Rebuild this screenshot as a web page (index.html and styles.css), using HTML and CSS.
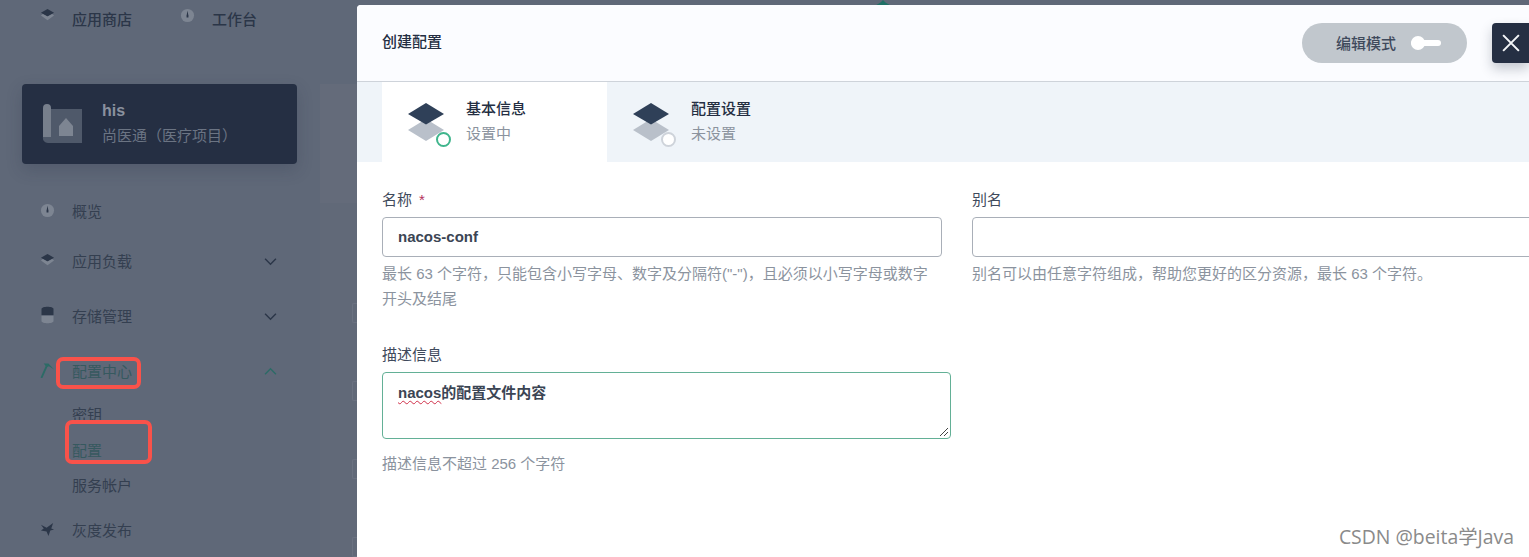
FILE: index.html
```html
<!DOCTYPE html>
<html lang="zh-CN">
<head>
<meta charset="utf-8">
<title>创建配置</title>
<link rel="stylesheet" href="styles.css">
</head>
<body>
<div class="page">
  <aside class="side">
    <div class="nav">
      <nav class="topnav">
        <span class="topitem first"><svg class="ico16" viewBox="0 0 16 16"><path d="M8 1l7 4-7 4-7-4z" fill="#2b3648"/><path d="M8 9L3 6.500 1 8l7 5 7-5-2-1.500z" fill="#7d8592"/></svg><b>应用商店</b></span>
        <span class="topitem second"><svg class="ico16" viewBox="0 0 16 16"><circle cx="8" cy="8" r="7" fill="#7d8592"/><path d="M7 8l1-5 1 5v2H7z" fill="#2b3648"/></svg><b>工作台</b></span>
      </nav>
      <div class="project">
        <svg class="proj-ico" viewBox="0 0 40 40"><rect x="7" y="5" width="33" height="34" fill="#4f596a"/><path d="M1 4a4 4 0 0 1 8 0v29H5a4 4 0 0 0-4 4z" fill="#777f8c"/><path d="M1 33a5 5 0 0 0 5 6h4v-6z" fill="#4f596a"/><path d="M17 22l7-8 7 8v10H17z" fill="#7d8592"/></svg>
        <div class="proj-text"><strong>his</strong><span>尚医通（医疗项目）</span></div>
      </div>
      <ul class="menu">
        <li class="mi first-mi"><svg class="ico16" viewBox="0 0 16 16"><circle cx="8" cy="8" r="7" fill="#7d8592"/><path d="M7 8l1-5 1 5v2H7z" fill="#2b3648"/></svg><span>概览</span></li>
        <li class="mi"><svg class="ico16" viewBox="0 0 16 16"><path d="M8 1l7 4-7 4-7-4z" fill="#2b3648"/><path d="M8 9L3 6.500 1 8l7 5 7-5-2-1.500z" fill="#7d8592"/></svg><span>应用负载</span><svg class="chev" viewBox="0 0 12 8"><path d="M1 1.500l5 5 5-5" fill="none" stroke="#2b3648" stroke-width="1.300"/></svg></li>
        <li class="mi"><svg class="ico16 tall" viewBox="0 0 14 18"><path d="M1 3c0-3 12-3 12 0v6H1z" fill="#2b3648"/><path d="M1 10h12v5c0 3-12 3-12 0z" fill="#7d8592"/></svg><span>存储管理</span><svg class="chev" viewBox="0 0 12 8"><path d="M1 1.500l5 5 5-5" fill="none" stroke="#2b3648" stroke-width="1.300"/></svg></li>
        <li class="mi on"><svg class="ico16" viewBox="0 0 16 16"><path d="M1.500 16L7 3.500" stroke="#2c6b66" stroke-width="2" fill="none"/><path d="M4 0.500h5l6 6.500-5.500-3.500-2.500 1z" fill="#2c6b66"/></svg><span class="hl-wrap">配置中心<i class="hl hl-a"></i></span><svg class="chev" viewBox="0 0 12 8"><path d="M1 6.500l5-5 5 5" fill="none" stroke="#2c6b66" stroke-width="1.300"/></svg></li>
      </ul>
      <ul class="sub">
        <li>密钥</li>
        <li class="on hl-wrap">配置<i class="hl hl-b"></i></li>
        <li>服务帐户</li>
      </ul>
      <div class="mi last"><svg class="ico16" viewBox="0 0 16 16"><path d="M1 3l6 3 7-5-2 6 3 1-4 1-2 6-2-5-6-1 3-2z" fill="#2b3648"/></svg><span>灰度发布</span></div>
    </div>
    <div class="strip">
      <div class="strip-top"></div>
      <div class="strip-low"><i></i><i></i><i></i><i></i></div>
    </div>
  </aside>
  <main class="panel">
    <header class="head">
      <h1>创建配置</h1>
      <div class="mode"><span>编辑模式</span><i class="toggle"></i></div>
      <button class="close" aria-label="关闭"><svg viewBox="0 0 16 16"><path d="M1 1l14 14M15 1L1 15" stroke="#f4f6f9" stroke-width="1.800" fill="none"/></svg></button>
    </header>
    <div class="tabs">
      <div class="tab active">
        <span class="tab-ico"><svg viewBox="0 0 38 38"><path d="M19 16l18 11-18 11L1 27z" fill="#b9c0ca"/><path d="M19 0l18 11-18 10.500L1 11z" fill="#2f4058"/></svg><i class="dot green"></i></span>
        <div class="tab-text"><strong>基本信息</strong><span>设置中</span></div>
      </div>
      <div class="tab">
        <span class="tab-ico"><svg viewBox="0 0 38 38"><path d="M19 16l18 11-18 11L1 27z" fill="#b9c0ca"/><path d="M19 0l18 11-18 10.500L1 11z" fill="#2f4058"/></svg><i class="dot grey"></i></span>
        <div class="tab-text"><strong>配置设置</strong><span>未设置</span></div>
      </div>
    </div>
    <form class="form">
      <div class="row">
        <div class="field name-field">
          <label>名称<em>*</em></label>
          <div class="input">nacos-conf</div>
          <p class="tip">最长 63 个字符，只能包含小写字母、数字及分隔符("-")，且必须以小写字母或数字开头及结尾</p>
        </div>
        <div class="field alias-field">
          <label>别名</label>
          <div class="input"></div>
          <p class="tip">别名可以由任意字符组成，帮助您更好的区分资源，最长 63 个字符。</p>
        </div>
      </div>
      <div class="field desc-field">
        <label>描述信息</label>
        <div class="textarea"><span class="typo">nacos</span>的配置文件内容<svg class="grip" viewBox="0 0 10 10"><path d="M9 1L1 9M9 5L5 9" stroke="#444" stroke-width="1" fill="none"/></svg></div>
        <p class="tip">描述信息不超过 256 个字符</p>
      </div>
    </form>
    <div class="mark">CSDN @beita学Java</div>
  </main>
  <svg class="peek" viewBox="0 0 16 6"><path d="M0 6l5-3 3-3 3 3 5 3z" fill="#1f6f66"/></svg>
</div>
</body>
</html>
```
FILE: styles.css
```css
* { box-sizing: border-box; }
html, body { margin: 0; height: 100%; }
body {
  width: 1529px;
  height: 557px;
  overflow: hidden;
  background: #5f6878;
  font-family: "Liberation Sans", "Noto Sans CJK SC", sans-serif;
  font-size: 15px;
  color: #2b3648;
}
.page { position: relative; display: flex; height: 557px; }
ul { list-style: none; margin: 0; padding: 0; }

.side { width: 357px; flex: none; display: flex; }
.nav { width: 320px; flex: none; padding-left: 22px; }
.strip { flex: 1; display: flex; flex-direction: column; padding-top: 84px; }
.strip-top { height: 136px; background: #646b7a; }
.strip-low { flex: 1; background: #616978; padding: 100px 0 0 32px; display: flex; flex-direction: column; gap: 58px; }
.strip-low i { display: block; height: 20px; border: 1px solid #6b7281; border-right: 0; border-radius: 2px 0 0 2px; }

.topnav { display: flex; height: 84px; padding: 9px 0 0 18px; align-items: flex-start; }
.topitem { display: flex; align-items: center; height: 18px; }
.topitem .ico16 { margin-bottom: 6px; }
.topitem b { margin-left: 17px; font-weight: 500; color: #2b3648; }
.topitem.first { width: 140px; }
.ico16 { width: 15px; height: 15px; flex: none; }
.ico16.tall { height: 18px; }

.project {
  width: 275px;
  height: 80px;
  background: #252f43;
  border-radius: 4px;
  box-shadow: 0 6px 16px rgba(37, 47, 67, .22);
  display: flex;
  align-items: center;
  padding-left: 20px;
}
.proj-ico { width: 40px; height: 40px; flex: none; }
.proj-text { margin-left: 20px; display: flex; flex-direction: column; }
.proj-text strong { font-size: 16px; line-height: 22px; color: #8a919e; }
.proj-text span { line-height: 24px; margin-top: 2px; color: #6b7483; }

.menu { margin-top: 29px; }
.mi { position: relative; display: flex; align-items: center; height: 34px; padding-left: 18px; width: 275px; color: #343f50; }
.mi + .mi { margin-top: 21px; }
.first-mi + .mi { margin-top: 16px; }
.mi > span { margin-left: 17px; }
.chev { position: absolute; left: 242px; top: 14px; width: 13px; height: 9px; }
.mi.on { color: #36595f; }
.hl-wrap { position: relative; }
.hl { position: absolute; border: 4px solid #f9524a; border-radius: 7px; }
.hl-a { left: -16px; top: -3px; width: 85px; height: 32px; }
.hl-b { left: -7px; top: -13px; width: 87px; height: 44px; }

.sub { padding-left: 50px; margin-top: 10px; color: #343f50; }
.sub li { height: 35.5px; line-height: 35px; width: 80px; }
.sub li.on { color: #36595f; display: block; }
.mi.last { margin-top: 9px; }

.panel { position: relative; flex: 1; min-width: 0; margin-top: 5px; background: #fff; border-radius: 4px 0 0 0; overflow: hidden; }
.head { display: flex; align-items: center; height: 77px; background: #fbfcff; border-bottom: 1px solid #ced3da; padding-left: 25px; }
.head h1 { margin: 0 0 5px; font-size: 15px; font-weight: 500; color: #242e42; flex: 1; }
.mode { width: 165px; height: 40px; margin-right: 25px; margin-bottom: 1px; border-radius: 20px; background: #c1c7cd; display: flex; align-items: center; padding-left: 34px; color: #3f4a5c; font-weight: 500; }
.toggle { position: relative; margin-left: 15px; width: 30px; height: 6px; border-radius: 3px; background: #fff; }
.toggle::before { content: ""; position: absolute; left: 0; top: -4px; width: 14px; height: 14px; border-radius: 50%; background: #fff; }
.close { width: 37px; height: 40px; margin-bottom: 1px; padding: 0; flex: none; border: 0; border-radius: 4px 0 0 4px; background: #252f43; box-shadow: 0 6px 12px rgba(37, 47, 67, .25); display: flex; align-items: center; justify-content: center; }
.close svg { width: 18px; height: 18px; }

.tabs { display: flex; height: 80px; background: #eff4f9; padding-left: 25px; }
.tab { width: 225px; display: flex; padding: 21px 0 0 25px; }
.tab.active { background: #fff; }
.tab-ico { position: relative; width: 38px; height: 38px; flex: none; }
.tab-ico svg { width: 38px; height: 38px; display: block; }
.dot { position: absolute; left: 29px; top: 29px; width: 15px; height: 15px; border-radius: 50%; background: #fff; }
.dot.green { border: 2px solid #3fb58c; }
.dot.grey { border: 2px solid #ced3da; }
.tab-text { margin-left: 21px; margin-top: -4px; display: flex; flex-direction: column; }
.tab-text strong { font-weight: 500; line-height: 20px; color: #242e42; }
.tab-text span { margin-top: 5px; line-height: 20px; color: #8b939e; }

.form { padding: 28px 0 0 25px; }
.row { display: flex; height: 155px; }
.field label { display: block; line-height: 20px; color: #3f4a5c; }
.field label em { font-style: normal; color: #b5305a; margin-left: 7px; }
.name-field { width: 560px; flex: none; }
.alias-field { width: 600px; margin-left: 30px; flex: none; }
.input { height: 40px; margin-top: 7px; border: 1px solid #a9afb8; border-radius: 4px; background: #fff; padding: 0 15px; line-height: 38px; font-weight: 700; color: #3b4554; }
.tip { margin: 4px 0 0; line-height: 25px; color: #8b939e; }
.name-field .tip { width: 552px; }
.desc-field { width: 569px; }
.textarea { position: relative; height: 67px; margin-top: 7px; border: 1px solid #63b096; border-radius: 4px; padding: 9px 15px; line-height: 22px; font-weight: 700; color: #3b4554; }
.typo { text-decoration: underline wavy #d0304a 1px; text-underline-offset: 2px; }
.grip { position: absolute; right: 1px; bottom: 1px; width: 10px; height: 10px; }
.desc-field .tip { margin-top: 12px; }
.mark { position: absolute; right: 15px; bottom: 8px; font-family: "Open Sans", "Noto Sans CJK SC", sans-serif; font-size: 19.400px; line-height: 24px; color: #8a8a8a; }
.peek { position: absolute; left: 875px; top: 0; width: 16px; height: 5px; }
```
